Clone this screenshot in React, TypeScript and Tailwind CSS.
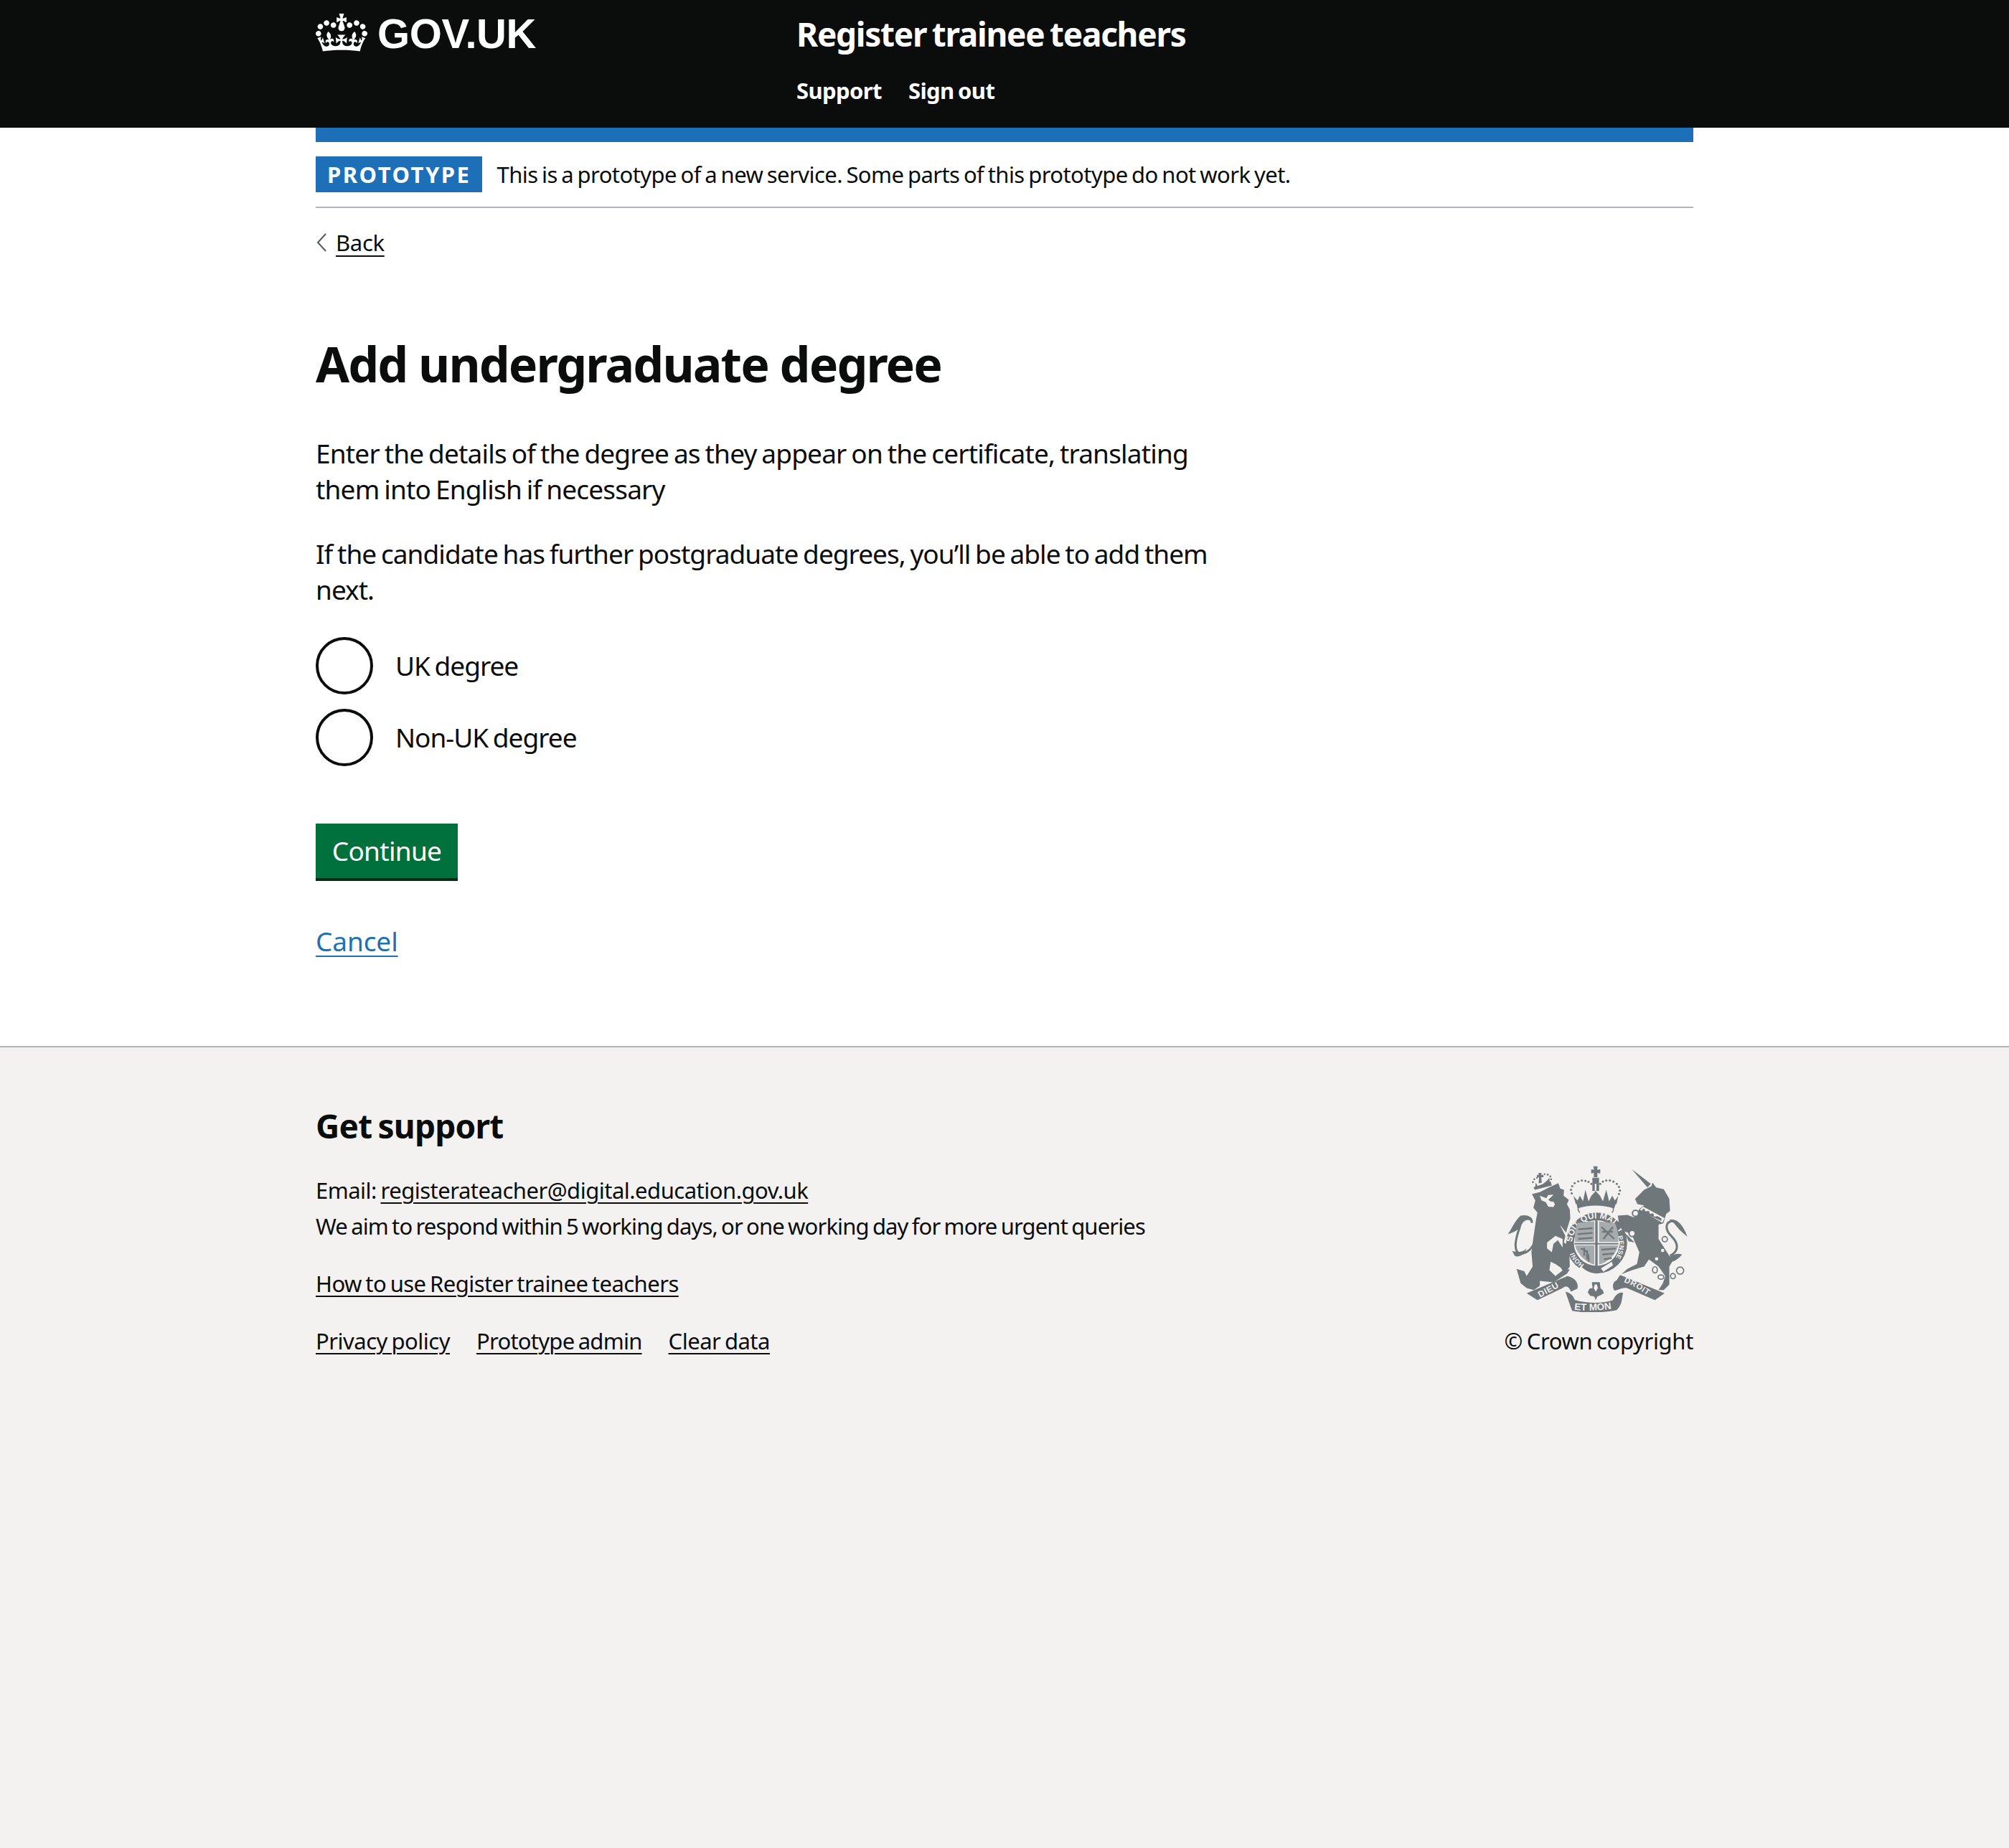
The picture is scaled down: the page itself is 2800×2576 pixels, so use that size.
import React from 'react';

const CROWN =
  'M25 30.2c3.5 1.5 7.7-.2 9.1-3.7 1.5-3.6-.2-7.8-3.9-9.2-3.6-1.4-7.6.3-9.1 3.9-1.4 3.5.3 7.5 3.9 9zM9 39.5c3.6 1.5 7.8-.2 9.2-3.7 1.5-3.6-.2-7.8-3.9-9.1-3.6-1.5-7.6.2-9.1 3.8-1.4 3.5.3 7.5 3.8 9zM4.4 57.2c3.5 1.5 7.7-.2 9.1-3.8 1.5-3.6-.2-7.7-3.9-9.1-3.5-1.5-7.6.3-9.1 3.8-1.4 3.5.3 7.6 3.9 9.1zm38.3-21.4c3.5 1.5 7.7-.2 9.1-3.8 1.5-3.6-.2-7.7-3.9-9.1-3.6-1.5-7.6.3-9.1 3.8-1.3 3.6.4 7.7 3.9 9.1zm64.4-5.6c-3.6 1.5-7.8-.2-9.1-3.7-1.5-3.6.2-7.8 3.8-9.2 3.6-1.4 7.7.3 9.2 3.9 1.3 3.5-.4 7.5-3.9 9zm15.9 9.3c-3.6 1.5-7.7-.2-9.1-3.7-1.5-3.6.2-7.8 3.7-9.1 3.6-1.5 7.7.2 9.2 3.8 1.5 3.5-.3 7.5-3.8 9zm4.7 17.7c-3.6 1.5-7.8-.2-9.2-3.8-1.5-3.6.2-7.7 3.9-9.1 3.6-1.5 7.7.3 9.2 3.8 1.3 3.5-.4 7.6-3.9 9.1zM89.3 35.8c-3.6 1.5-7.8-.2-9.2-3.8-1.4-3.6.2-7.7 3.9-9.1 3.6-1.5 7.7.3 9.2 3.8 1.4 3.6-.3 7.7-3.9 9.1zM69.7 17.7l8.9 4.7V9.3l-8.9 2.8c-.2-.3-.5-.6-.9-.9L72.4 0H59.6l3.6 11.2c-.3.3-.6.5-.9.9l-8.8-2.8v13.1l8.8-4.7c.3.3.6.7.9.9l-5 15.4v.1c-.2.8-.4 1.6-.4 2.4 0 4.1 3.1 7.5 7 8.1h.2c.3 0 .7.1 1 .1.4 0 .7 0 1-.1h.2c4-.6 7.1-4.1 7.1-8.1 0-.8-.1-1.7-.4-2.4V34l-5.1-15.4c.4-.2.7-.6 1-.9zM66 92.8c16.9 0 32.8 1.1 47.1 3.2 4-16.9 8.9-26.7 14-33.5l-9.6-3.4c1 4.9 1.1 7.2 0 10.2-1.5-1.4-3-4.3-4.2-8.7L108.6 76c2.8-2 5-3.2 7.5-3.3-4.4 9.4-10 11.9-13.6 11.2-4.3-.8-6.3-4.6-5.6-7.9 1-4.7 5.7-5.9 8-.5 4.3-8.7-3-11.4-7.6-8.8 7.1-7.2 7.9-13.5 2.1-21.1-8 6.1-8.1 12.3-4.5 20.8-4.7-5.4-12.1-2.5-9.5 6.2 3.4-5.2 7.9-2 7.2 3.1-.6 4.3-6.4 7.8-13.5 7.2-10.3-.9-10.9-8-11.2-13.8 2.5-.5 7.1 1.8 11 7.3L80.2 60c-4.1 4.4-8 5.3-12.3 5.4 1.4-4.4 8-11.6 8-11.6H55.5s6.4 7.2 7.9 11.6c-4.2-.1-8-1-12.3-5.4l1.4 16.4c3.9-5.5 8.5-7.7 10.9-7.3-.3 5.8-.9 12.8-11.1 13.8-7.2.6-12.9-2.9-13.5-7.2-.7-5 3.8-8.3 7.1-3.1 2.7-8.7-4.6-11.6-9.4-6.2 3.7-8.5 3.6-14.7-4.6-20.8-5.8 7.6-5 13.9 2.2 21.1-4.7-2.6-11.9.1-7.7 8.8 2.3-5.5 7.1-4.2 8.1.5.7 3.3-1.3 7.1-5.7 7.9-3.5.7-9-1.8-13.5-11.2 2.5.1 4.7 1.3 7.5 3.3l-4.7-15.4c-1.2 4.4-2.7 7.2-4.3 8.7-1.1-3-.9-5.3 0-10.2l-9.5 3.4c5 6.9 9.9 16.7 14 33.5 14.8-2.1 30.8-3.2 47.7-3.2z';

const CrownLogo = () => (
  <svg viewBox="0 0 132 97" className="w-[72px] h-[53px] text-white" fill="currentColor">
    <path fillRule="evenodd" d={CROWN} />
  </svg>
);

const G = '#6f777b';
const BG = '#f3f2f1';

// Royal coat of arms, coordinates taken from a 3x crop
const Crest = () => (
  <svg viewBox="70 80 760 610" className="w-[254px] h-[204px]">
    <defs>
      <path id="garter-top" d="M340 402 A103 103 0 0 1 546 402" />
      <path id="garter-right" d="M530 375 A96 96 0 0 1 495 490" />
      <path id="garter-left" d="M392 492 A103 103 0 0 1 342 425" />
      <path id="scroll-left" d="M205 630 Q260 600 310 572" />
      <path id="scroll-mid" d="M345 680 Q435 690 528 672" />
      <path id="scroll-right" d="M555 565 Q610 585 670 632" />
    </defs>

    {/* lion */}
    <path
      fill={G}
      d="M172 198 L205 190 L240 172 L282 152 L290 175 L306 180 L304 205 L326 222 L318 240 L330 262 L332 300 L318 345 L305 400 L335 415 L328 445 L330 500 L308 530 L292 505 L270 490 L250 480 L245 515 L270 540 L305 512 L330 512 L318 530 L290 548 L262 566 L205 560 L205 580 L180 598 L150 590 L125 570 L108 510 L140 520 L150 540 L175 500 L170 440 L178 380 L190 300 L195 275 L178 255 L186 225 Z"
    />
    <path
      fill={BG}
      d="M205 205 L232 215 L240 202 L262 200 L240 222 L268 240 L262 252 L240 250 L230 232 L212 224 Z"
    />
    <circle cx="255" cy="240" r="11" fill={BG} />
    <path fill={BG} d="M288 325 L330 378 L318 385 Z" />
    <path
      fill={BG}
      d="M235 400 L270 372 L300 385 L300 420 L280 390 L262 405 L255 440 L235 425 Z"
    />
    {/* lion tail */}
    <path
      fill="none"
      stroke={G}
      strokeWidth="9"
      d="M195 345 C190 395 175 440 125 448 C95 440 100 395 120 340 C130 295 170 280 172 318"
    />
    <path fill={G} d="M72 365 C90 340 100 310 125 288 C150 282 172 290 175 315 C150 295 135 310 115 345 C100 355 85 360 72 365 Z" />
    <path fill={G} d="M90 435 C110 440 130 445 150 425 C140 450 120 465 100 455 Z" />
    {/* lion crown */}
    <path fill={G} d="M178 170 L250 145 L255 162 L185 180 Z" />
    <path fill={G} d="M199 110 L212 110 L211 118 L220 118 L220 128 L211 128 L213 150 L200 153 L202 128 L193 129 L193 118 L201 118 Z" />
    <g fill={G}>
      <circle cx="176" cy="148" r="4" />
      <circle cx="182" cy="136" r="4" />
      <circle cx="193" cy="130" r="3.5" />
      <circle cx="225" cy="115" r="3.5" />
      <circle cx="238" cy="117" r="4" />
      <circle cx="249" cy="124" r="4" />
      <circle cx="252" cy="136" r="4" />
    </g>
    <path fill={G} d="M188 150 L196 165 L215 158 L235 142 L245 130 L246 150 L185 172 Z" />

    {/* centre crown */}
    <path fill={G} d="M428 82 L446 82 L444 96 L457 95 L457 112 L445 110 L445 128 L430 128 L430 110 L419 112 L419 95 L431 96 Z" />
    <path fill={G} d="M424 130 L452 130 L452 185 L424 185 Z" />
    <path fill={BG} d="M434 155 L441 155 L441 184 L434 184 Z" />
    <g fill={G}>
      <circle cx="338" cy="195" r="4.5" />
      <circle cx="335" cy="180" r="4.5" />
      <circle cx="340" cy="165" r="4.5" />
      <circle cx="350" cy="152" r="4.5" />
      <circle cx="365" cy="145" r="4.5" />
      <circle cx="380" cy="141" r="4.5" />
      <circle cx="395" cy="143" r="4.5" />
      <circle cx="408" cy="147" r="4.5" />
      <circle cx="420" cy="155" r="4.5" />
      <circle cx="457" cy="155" r="4.5" />
      <circle cx="468" cy="146" r="4.5" />
      <circle cx="482" cy="141" r="4.5" />
      <circle cx="497" cy="141" r="4.5" />
      <circle cx="512" cy="146" r="4.5" />
      <circle cx="526" cy="155" r="4.5" />
      <circle cx="535" cy="168" r="4.5" />
      <circle cx="539" cy="183" r="4.5" />
      <circle cx="535" cy="197" r="4.5" />
    </g>
    <path
      fill={G}
      d="M345 205 L362 225 L372 205 L385 228 L395 180 L408 228 L420 205 L438 185 L456 205 L468 228 L482 180 L494 228 L507 205 L518 225 L532 205 L525 240 C480 228 400 228 355 240 Z"
    />
    <path fill={G} d="M358 238 C410 225 470 225 522 238 L515 258 C465 242 410 242 362 258 Z" />
    <path
      fill="none"
      stroke={G}
      strokeWidth="4"
      d="M372 275 C360 265 362 252 378 248 C420 238 465 238 498 248 C515 254 515 268 505 275"
    />

    {/* shield garter */}
    <circle cx="442" cy="402" r="127" fill={G} />
    <circle cx="442" cy="402" r="95" fill={BG} />
    <text fontFamily="Liberation Sans, sans-serif" fontWeight="700" fontSize="36" fill={BG}>
      <textPath href="#garter-top" startOffset="1%">SOIT QUI MAL Y</textPath>
    </text>
    <text fontFamily="Liberation Sans, sans-serif" fontWeight="700" fontSize="27" fill={BG}>
      <textPath href="#garter-right">PENSE</textPath>
    </text>
    <text fontFamily="Liberation Sans, sans-serif" fontWeight="700" fontSize="27" fill={BG}>
      <textPath href="#garter-left" startOffset="2%">HONI</textPath>
    </text>
    {/* shield quarters */}
    <path fill={G} d="M350 402 L532 402 L532 408 L350 408 Z" />
    <path fill={G} d="M436 308 L446 308 L446 505 L436 505 Z" />
    <path fill="#a6abad" d="M362 318 L432 312 L432 398 L352 398 C350 370 352 345 362 318 Z" />
    <path fill="#a6abad" d="M452 312 L518 320 C530 345 534 370 532 398 L452 398 Z" />
    <path fill="#a6abad" d="M352 412 L432 412 L432 492 C395 482 362 450 352 412 Z" />
    <path fill="#a6abad" d="M452 412 L532 412 C522 450 490 482 452 492 Z" />
    <g stroke={G} strokeWidth="7" fill="none">
      <path d="M365 345 L425 340 M362 365 L425 360 M365 385 L425 380" />
      <path d="M462 335 L515 385 M510 335 L470 385 M465 355 L510 355" />
      <path d="M462 430 L522 425 M466 450 L515 445 M472 470 L505 465" />
      <path d="M375 425 C400 430 412 450 408 480 M390 422 L390 455 M402 432 L402 470" />
    </g>
    {/* buckle */}
    <path fill={BG} d="M375 498 C390 515 420 530 445 532 L440 546 C410 545 385 528 368 510 Z" />
    <circle cx="448" cy="540" r="7" fill={BG} />
    <circle cx="412" cy="530" r="6" fill={BG} />
    <path fill={BG} d="M460 508 L505 480 L510 495 L470 522 Z" />

    {/* unicorn */}
    <path fill={G} d="M588 94 L668 155 L654 170 Z" />
    <path
      fill={G}
      d="M602 218 L640 180 L670 165 L675 150 L690 170 L722 178 L745 218 L748 268 L732 280 L720 320 L700 325 L700 385 L745 455 L760 475 L745 500 L745 575 L722 598 L700 598 L718 570 L728 540 L700 500 L660 470 L640 500 L590 515 L545 532 L570 510 L610 490 L620 440 L600 395 L588 365 L548 350 L535 320 L530 288 L570 285 L598 295 L622 258 L640 245 L612 240 Z"
    />
    <path fill={BG} d="M622 262 L636 250 L725 298 L716 318 Z" />
    <path fill={G} d="M632 262 L640 258 L645 270 L660 268 L664 280 L678 278 L682 292 L696 290 L712 300 L712 310 L632 272 Z" />
    <circle cx="604" cy="278" r="13" fill={BG} stroke={G} strokeWidth="6" />
    <circle cx="590" cy="362" r="13" fill={BG} stroke={G} strokeWidth="6" />
    <circle cx="726" cy="386" r="11" fill={BG} stroke={G} strokeWidth="5" />
    <circle cx="717" cy="433" r="7" fill={BG} />
    <circle cx="692" cy="468" r="7" fill={BG} />
    <g fill="none" stroke={G} strokeWidth="5">
      <ellipse cx="685" cy="514" rx="10" ry="13" />
      <ellipse cx="710" cy="544" rx="12" ry="9" />
      <ellipse cx="760" cy="540" rx="10" ry="11" />
      <circle cx="790" cy="517" r="15" />
    </g>
    <path d="M560 360 L600 400 L575 395 Z" fill={G} />
    {/* unicorn tail */}
    <path
      fill="none"
      stroke={G}
      strokeWidth="9"
      d="M748 455 C790 435 780 400 755 375 C725 345 725 310 765 310"
    />
    <path fill={G} d="M745 305 C775 300 800 320 820 375 C800 360 785 345 765 320 Z" />
    <path fill={G} d="M745 460 C770 445 785 445 798 450 C780 470 765 482 745 480 Z" />

    {/* motto scroll */}
    <path fill={G} d="M150 612 L320 540 C350 545 368 570 362 592 L335 605 C325 582 315 578 300 590 L195 640 Z" />
    <path fill={G} d="M312 605 C340 612 345 628 352 640 C410 655 465 655 510 640 C520 620 535 605 552 610 L545 650 C540 665 530 678 525 682 C450 695 400 695 340 685 C330 660 320 630 312 605 Z" />
    <path fill={G} d="M525 558 L540 535 L725 612 L685 640 L568 590 C550 585 535 598 515 600 C505 580 510 565 525 558 Z" />
    <text fontFamily="Liberation Sans, sans-serif" fontWeight="700" fontSize="36" letterSpacing="2" fill={BG}>
      <textPath href="#scroll-left">DIEU</textPath>
    </text>
    <text fontFamily="Liberation Sans, sans-serif" fontWeight="700" fontSize="40" fill={BG}>
      <textPath href="#scroll-mid" startOffset="2%">ET MON</textPath>
    </text>
    <text fontFamily="Liberation Sans, sans-serif" fontWeight="700" fontSize="34" letterSpacing="2" fill={BG}>
      <textPath href="#scroll-right">DROIT</textPath>
    </text>
    {/* fleur */}
    <path fill={G} d="M422 565 L455 565 L458 590 L468 600 L472 612 L458 620 L445 625 L438 640 L432 625 L415 622 L405 608 L412 592 L425 590 Z" />
    <path fill={BG} d="M434 575 L443 575 L447 590 L438 605 L430 590 Z" />
  </svg>
);

const Radio = ({ label }: { label: string }) => (
  <label className="flex items-center h-[80px]">
    <span className="w-[80px] h-[80px] rounded-full border-[4px] border-[#0b0c0c] bg-white shrink-0" />
    <span className="ml-[31px] text-[37px] leading-[50px] tracking-[-1px] [word-spacing:-2px]">{label}</span>
  </label>
);

const App: React.FC = () => {
  return (
    <div className="min-h-[2576px] flex flex-col bg-white text-[#0b0c0c] font-['Noto_Sans',sans-serif]">
      <header className="bg-[#0b0c0c] h-[178px] shrink-0">
        <div className="w-[1920px] mx-auto flex">
          <a className="w-[670px] flex items-start pt-[19px] text-white">
            <CrownLogo />
            <span className="ml-[14px] mt-[-5px] font-['Liberation_Sans',sans-serif] font-bold text-[58px] leading-[66px] tracking-[-0.4px]">
              GOV.UK
            </span>
          </a>
          <div className="text-white font-bold">
            <div className="pt-[15px] text-[46px] leading-[64px] tracking-[-1.3px] [word-spacing:-3px]">Register trainee teachers</div>
            <nav className="mt-[22px] flex gap-[37px] text-[31px] leading-[50px] tracking-[-0.6px] [word-spacing:-2px]">
              <a>Support</a>
              <a>Sign out</a>
            </nav>
          </div>
        </div>
      </header>

      <main className="w-[1920px] mx-auto shrink-0">
        <div className="h-[20px] bg-[#1d70b8]" />
        <div className="flex items-start h-[92px] border-b-2 border-[#b1b4b6] pt-[20px]">
          <strong className="bg-[#1d70b8] text-white text-[31px] leading-[50px] font-bold tracking-[2.5px] px-[16px] h-[50px] flex items-center">
            PROTOTYPE
          </strong>
          <span className="ml-[20px] text-[31px] leading-[50px] tracking-[-0.56px] [word-spacing:-2px]">
            This is a prototype of a new service. Some parts of this prototype do not work yet.
          </span>
        </div>
        <a className="flex items-center mt-[28px] h-[40px] text-[31px] tracking-[-0.3px]">
          <svg width="16" height="26" viewBox="0 0 16 26" fill="none" stroke="#505a5f" strokeWidth="2" className="mr-[12px]">
            <path d="M14 1 L3 13 L14 25" />
          </svg>
          <span className="underline underline-offset-[6px] decoration-2">Back</span>
        </a>

        <h1 className="mt-[104px] text-[68px] leading-[90px] font-bold tracking-[-1.9px]">Add undergraduate degree</h1>

        <div className="mt-[55px] w-[1260px] text-[37px] leading-[50px] tracking-[-0.82px] [word-spacing:-2px]">
          <p>Enter the details of the degree as they appear on the certificate, translating them into English if necessary</p>
          <p className="mt-[40px] tracking-[-0.95px]">If the candidate has further postgraduate degrees, you’ll be able to add them next.</p>
        </div>

        <div className="mt-[41px] flex flex-col gap-[20px]">
          <Radio label="UK degree" />
          <Radio label="Non-UK degree" />
        </div>

        <button className="mt-[80px] block h-[76px] w-[198px] bg-[#00703c] text-white text-[37px] leading-[50px] tracking-[-0.7px] shadow-[0_4px_0_#002d18]">
          Continue
        </button>

        <a className="mt-[63px] block text-[37px] leading-[50px] text-[#1d70b8] underline underline-offset-[6px] decoration-2 tracking-[-0.1px]">
          Cancel
        </a>
      </main>

      <footer className="mt-[121px] flex-1 bg-[#f3f2f1] border-t-2 border-[#b1b4b6]">
        <div className="w-[1920px] mx-auto pt-[77px] flex justify-between">
          <div className="text-[31px] leading-[50px] tracking-[-0.5px] [word-spacing:-2px]">
            <h2 className="text-[46px] leading-[64px] font-bold tracking-[-0.8px] [word-spacing:-3px]">Get support</h2>
            <p className="mt-[33px]">
              Email: <a className="underline underline-offset-[5px] decoration-2">registerateacher@digital.education.gov.uk</a>
            </p>
            <p className="tracking-[-0.87px]">We aim to respond within 5 working days, or one working day for more urgent queries</p>
            <p className="mt-[30px]">
              <a className="underline underline-offset-[5px] decoration-2 tracking-[-0.55px]">How to use Register trainee teachers</a>
            </p>
            <div className="mt-[30px] flex gap-[37px]">
              <a className="underline underline-offset-[5px] decoration-2">Privacy policy</a>
              <a className="underline underline-offset-[5px] decoration-2 tracking-[-0.75px]">Prototype admin</a>
              <a className="underline underline-offset-[5px] decoration-2">Clear data</a>
            </div>
          </div>
          <div className="flex flex-col items-center pt-[88px]">
            <Crest />
            <p className="mt-[15px] text-[31px] leading-[50px] tracking-[-0.35px] [word-spacing:-2px]">© Crown copyright</p>
          </div>
        </div>
      </footer>
    </div>
  );
};

export default App;
